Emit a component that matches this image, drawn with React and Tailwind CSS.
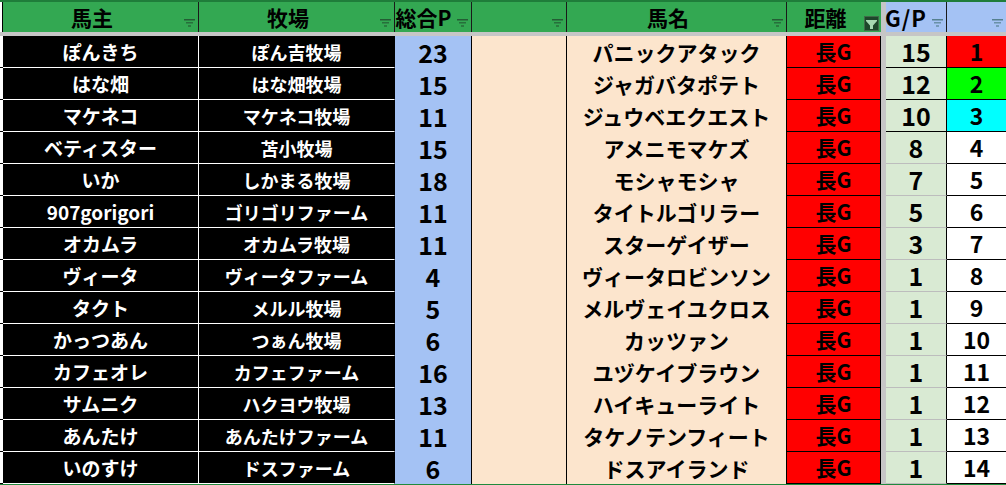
import React from "react";

const rows = [
  ["ぽんきち", "ぽん吉牧場", 23, "パニックアタック", 15, 1],
  ["はな畑", "はな畑牧場", 15, "ジャガバタポテト", 12, 2],
  ["マケネコ", "マケネコ牧場", 11, "ジュウベエクエスト", 10, 3],
  ["ベティスター", "苫小牧場", 15, "アメニモマケズ", 8, 4],
  ["いか", "しかまる牧場", 18, "モシャモシャ", 7, 5],
  ["907gorigori", "ゴリゴリファーム", 11, "タイトルゴリラー", 5, 6],
  ["オカムラ", "オカムラ牧場", 11, "スターゲイザー", 3, 7],
  ["ヴィータ", "ヴィータファーム", 4, "ヴィータロビンソン", 1, 8],
  ["タクト", "メルル牧場", 5, "メルヴェイユクロス", 1, 9],
  ["かっつあん", "つぁん牧場", 6, "カッツァン", 1, 10],
  ["カフェオレ", "カフェファーム", 16, "ユヅケイブラウン", 1, 11],
  ["サムニク", "ハクヨウ牧場", 13, "ハイキューライト", 1, 12],
  ["あんたけ", "あんたけファーム", 11, "タケノテンフィート", 1, 13],
  ["いのすけ", "ドスファーム", 6, "ドスアイランド", 1, 14],
];

const rankBg = ["bg-[#ff0000]", "bg-[#00ff00]", "bg-[#00ffff]"];

function FilterIcon({ color = "#245c34" }) {
  return (
    <svg width="11" height="8" viewBox="0 0 11 8">
      <rect x="0" y="0" width="11" height="1.5" fill={color} />
      <rect x="2" y="3" width="7" height="1.5" fill={color} opacity="0.75" />
      <rect x="4" y="6" width="3" height="2" fill={color} opacity="0.6" />
    </svg>
  );
}

function ActiveFilter() {
  return (
    <div className="flex h-[15px] w-[15px] items-center justify-center border border-[#3e6b48] bg-[#1d472a]">
      <svg width="13" height="13" viewBox="0 0 13 13">
        <path d="M1 3 H12 V4 L8 8.5 V12 H5 V8.5 L1 4 Z" fill="#a6d9b1" />
      </svg>
    </div>
  );
}

function HeadCell({ w, label, bg = "bg-[#33a852]", border = "border-r border-[#1a1a1a]", icon = "#245c34", text = "text-[20px]" }) {
  return (
    <div className={`flex h-full ${w} ${bg} ${border}`}>
      <span className={`flex flex-1 items-center justify-center font-bold leading-none text-black ${text}`}>
        {label}
      </span>
      <span className="flex w-[17px] shrink-0 items-end justify-end pb-[5px] pr-[3px]">
        <FilterIcon color={icon} />
      </span>
    </div>
  );
}

export default function App() {
  return (
    <div className="h-[485px] w-[1006px] overflow-hidden bg-white font-['Noto_Sans_CJK_JP','Noto_Sans_CJK_SC',sans-serif]">
      {/* header */}
      <div className="flex h-[32px] border-t-2 border-[#1f7d3a]">
        <div className="h-full w-[3px] border-r border-black bg-white" />
        <HeadCell w="w-[196px]" label="馬主" text="text-[21px]" />
        <HeadCell w="w-[196px]" label="牧場" text="text-[21px]" />
        <HeadCell w="w-[77px]" label="総合P" text="text-[21px] -ml-[2px]" />
        <HeadCell w="w-[95px]" label="" />
        <HeadCell w="w-[220px]" label="馬名" text="text-[21px]" />
        <div className="flex h-full w-[94px] bg-[#33a852]">
          <span className="flex flex-1 items-center justify-center text-[21px] font-bold leading-none text-black">
            距離
          </span>
          <span className="flex items-end pb-[1px] pr-[2px]">
            <ActiveFilter />
          </span>
        </div>
        <div className="h-full w-[5px] bg-[#c6c6c6]" />
        <HeadCell w="w-[61px]" label="G/P" bg="bg-[#a4c2f4]" icon="#56808f" text="text-[22px] tracking-[1px] -ml-[3px]" />
        <HeadCell w="w-[59px]" label="" bg="bg-[#a4c2f4]" border="" icon="#56808f" />
      </div>

      <div className="h-[4px] w-full bg-[#c6c6c6]" />

      {/* body */}
      {rows.map(([owner, farm, total, horse, gp, rank], i) => (
        <div key={i} className="flex h-[32px] font-bold leading-none">
          <div className="h-full w-[3px] border-b border-black bg-white" />
          <div className="flex h-full w-[196px] items-center justify-center border-b border-r border-white bg-black text-[19px] text-white">
            {owner}
          </div>
          <div className="flex h-full w-[196px] items-center justify-center border-b border-r border-b-white border-r-black bg-black text-[18px] text-white">
            {farm}
          </div>
          <div className="flex h-full w-[77px] items-center justify-center border-r border-black bg-[#a4c2f4] text-[25px] text-black">
            {total}
          </div>
          <div className="h-full w-[95px] border-r border-black bg-[#fce5cd]" />
          <div className="flex h-full w-[220px] items-center justify-center border-r border-black bg-[#fce5cd] text-[21px] text-black">
            {horse}
          </div>
          <div className="flex h-full w-[94px] items-center justify-center border-b border-r border-black bg-[#ff0000] text-[21px] text-black">
            長G
          </div>
          <div className="h-full w-[5px] bg-[#c6c6c6]" />
          <div
            className={`flex h-full w-[61px] items-center justify-center border-b border-r border-r-black bg-[#d9ead3] text-[25px] text-black ${
              i < 3 ? "border-b-black" : "border-b-[#bdbdbd]"
            }`}
          >
            {gp}
          </div>
          <div
            className={`flex h-full w-[59px] items-center justify-center border-b border-black text-[23px] text-black ${
              rankBg[i] || "bg-white"
            }`}
          >
            {rank}
          </div>
        </div>
      ))}
      <div className="h-[2px] w-full bg-[#1f8a3c]" />
    </div>
  );
}
